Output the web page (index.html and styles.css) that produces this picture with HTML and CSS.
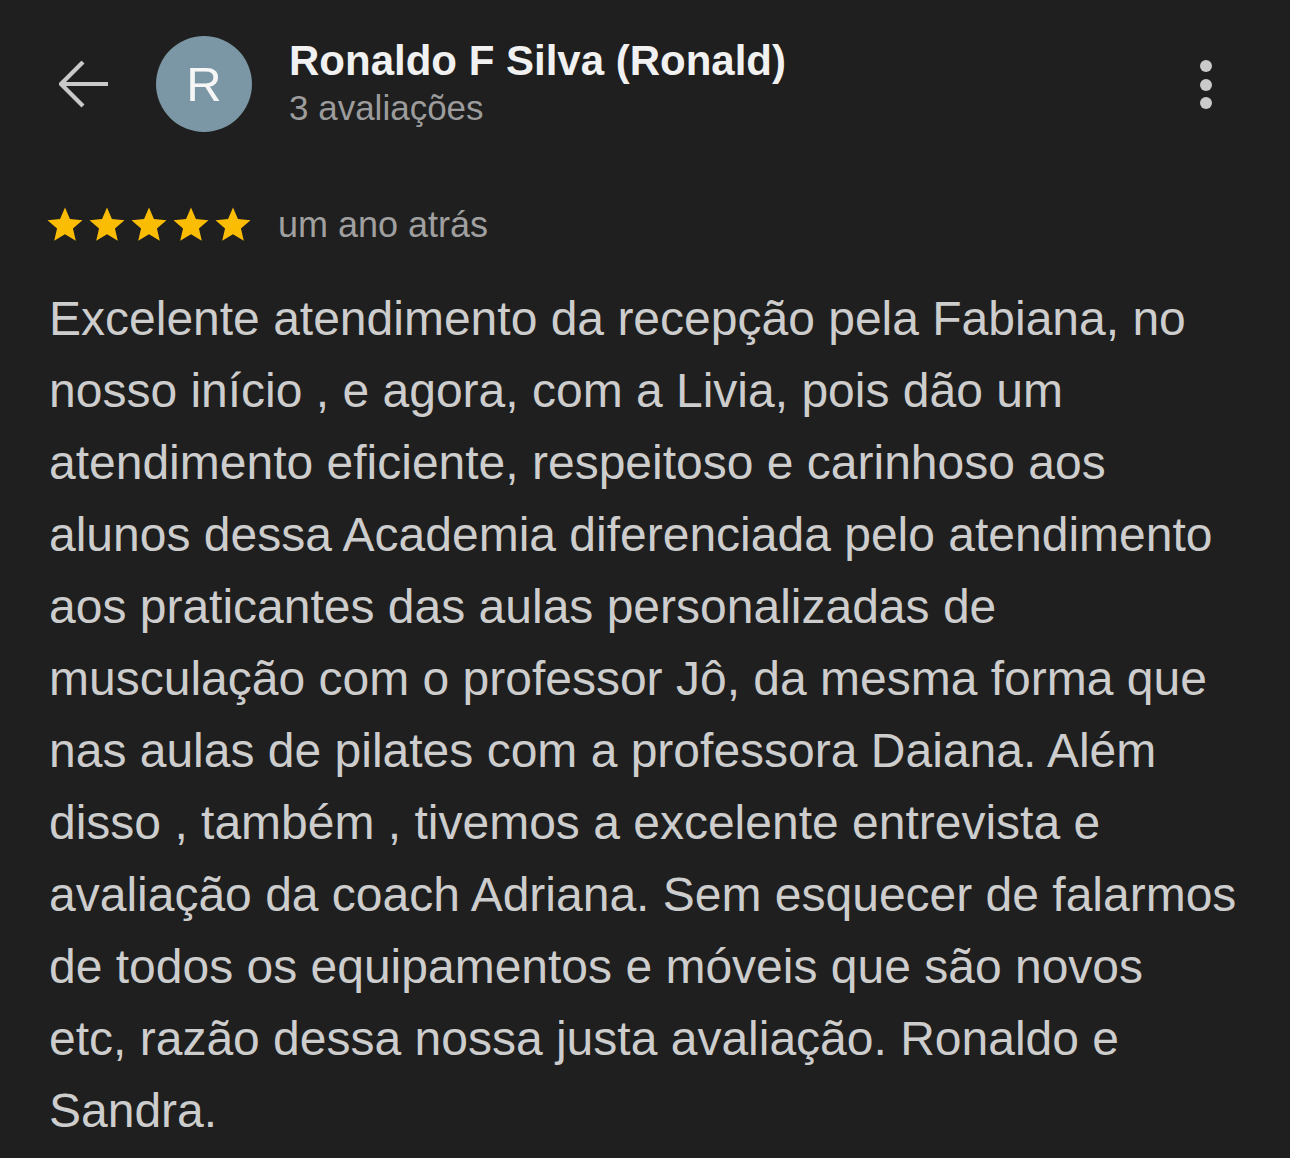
FILE: index.html
```html
<!DOCTYPE html>
<html lang="pt">
<head>
<meta charset="utf-8">
<link rel="stylesheet" href="styles.css">
</head>
<body>
<div class="page">
  <header class="header">
    <button class="back" aria-label="Voltar">
      <svg width="50" height="48" viewBox="0 0 50 48"><path d="M2 23H49M24 1L2 23L24 45" fill="none" stroke="#c9c9c9" stroke-width="4.2" stroke-linecap="butt" stroke-linejoin="miter"/></svg>
    </button>
    <div class="avatar">R</div>
    <div class="who">
      <div class="name">Ronaldo F Silva (Ronald)</div>
      <div class="count">3 avaliações</div>
    </div>
    <div class="more" aria-label="Mais"><span></span><span></span><span></span></div>
  </header>
  <div class="meta">
    <div class="stars">
      <svg viewBox="0 0 24 24"><path d="M12 17.27L18.18 21l-1.64-7.03L22 9.24l-7.19-.61L12 2 9.19 8.63 2 9.24l5.46 4.73L5.82 21z"/></svg>
      <svg viewBox="0 0 24 24"><path d="M12 17.27L18.18 21l-1.64-7.03L22 9.24l-7.19-.61L12 2 9.19 8.63 2 9.24l5.46 4.73L5.82 21z"/></svg>
      <svg viewBox="0 0 24 24"><path d="M12 17.27L18.18 21l-1.64-7.03L22 9.24l-7.19-.61L12 2 9.19 8.63 2 9.24l5.46 4.73L5.82 21z"/></svg>
      <svg viewBox="0 0 24 24"><path d="M12 17.27L18.18 21l-1.64-7.03L22 9.24l-7.19-.61L12 2 9.19 8.63 2 9.24l5.46 4.73L5.82 21z"/></svg>
      <svg viewBox="0 0 24 24"><path d="M12 17.27L18.18 21l-1.64-7.03L22 9.24l-7.19-.61L12 2 9.19 8.63 2 9.24l5.46 4.73L5.82 21z"/></svg>
    </div>
    <span class="when">um ano atrás</span>
  </div>
  <p class="review">Excelente atendimento da recepção pela Fabiana, no nosso início , e agora, com a Livia, pois dão um atendimento eficiente, respeitoso e carinhoso aos alunos dessa Academia diferenciada pelo atendimento aos praticantes das aulas personalizadas de musculação com o professor Jô, da mesma forma que nas aulas de pilates com a professora Daiana. Além disso , também , tivemos a excelente entrevista e avaliação da coach Adriana. Sem esquecer de falarmos de todos os equipamentos e móveis que são novos<br>etc, razão dessa nossa justa avaliação. Ronaldo e Sandra.</p>
</div>
</body>
</html>
```

FILE: styles.css
```css
html, body {
  margin: 0;
  padding: 0;
  background: #1f1f1f;
}
body {
  font-family: "Liberation Sans", Arial, Helvetica, sans-serif;
  width: 1290px;
  height: 1158px;
  overflow: hidden;
}
.page {
  padding: 0 0 0 49px;
  width: 1200px;
}
.header {
  display: flex;
  align-items: flex-start;
  height: 168px;
  padding-top: 36px;
  box-sizing: border-box;
}
.back {
  background: none;
  border: 0;
  padding: 0;
  margin: 25px 0 0 10px;
  width: 50px;
  height: 48px;
  display: flex;
}
.avatar {
  margin-left: 47px;
  width: 96px;
  height: 96px;
  border-radius: 50%;
  background: #7b97a5;
  color: #f6f6f6;
  font-size: 49px;
  line-height: 96px;
  text-align: center;
  flex-shrink: 0;
}
.who {
  margin-left: 37px;
  flex: 1;
  padding-top: 1px;
}
.name {
  color: #f1f1f1;
  font-weight: bold;
  font-size: 42px;
  line-height: 48px;
}
.count {
  color: #9c9c9c;
  font-size: 35px;
  line-height: 45px;
}
.more {
  display: flex;
  flex-direction: column;
  gap: 6.5px;
  margin: 24px 37px 0 0;
}
.more span {
  width: 12px;
  height: 12px;
  border-radius: 50%;
  background: #cacaca;
}
.meta {
  display: flex;
  align-items: center;
  margin-top: 20px;
  height: 74px;
}
.stars {
  display: flex;
  margin-left: -5px;
}
.stars svg {
  width: 42px;
  height: 42px;
  fill: #fbbc04;
}
.when {
  margin-left: 24px;
  color: #a0a0a0;
  font-size: 36px;
}
.review {
  margin: 21px 0 0;
  color: #cdcdcd;
  font-size: 48px;
  line-height: 72px;
}
```
